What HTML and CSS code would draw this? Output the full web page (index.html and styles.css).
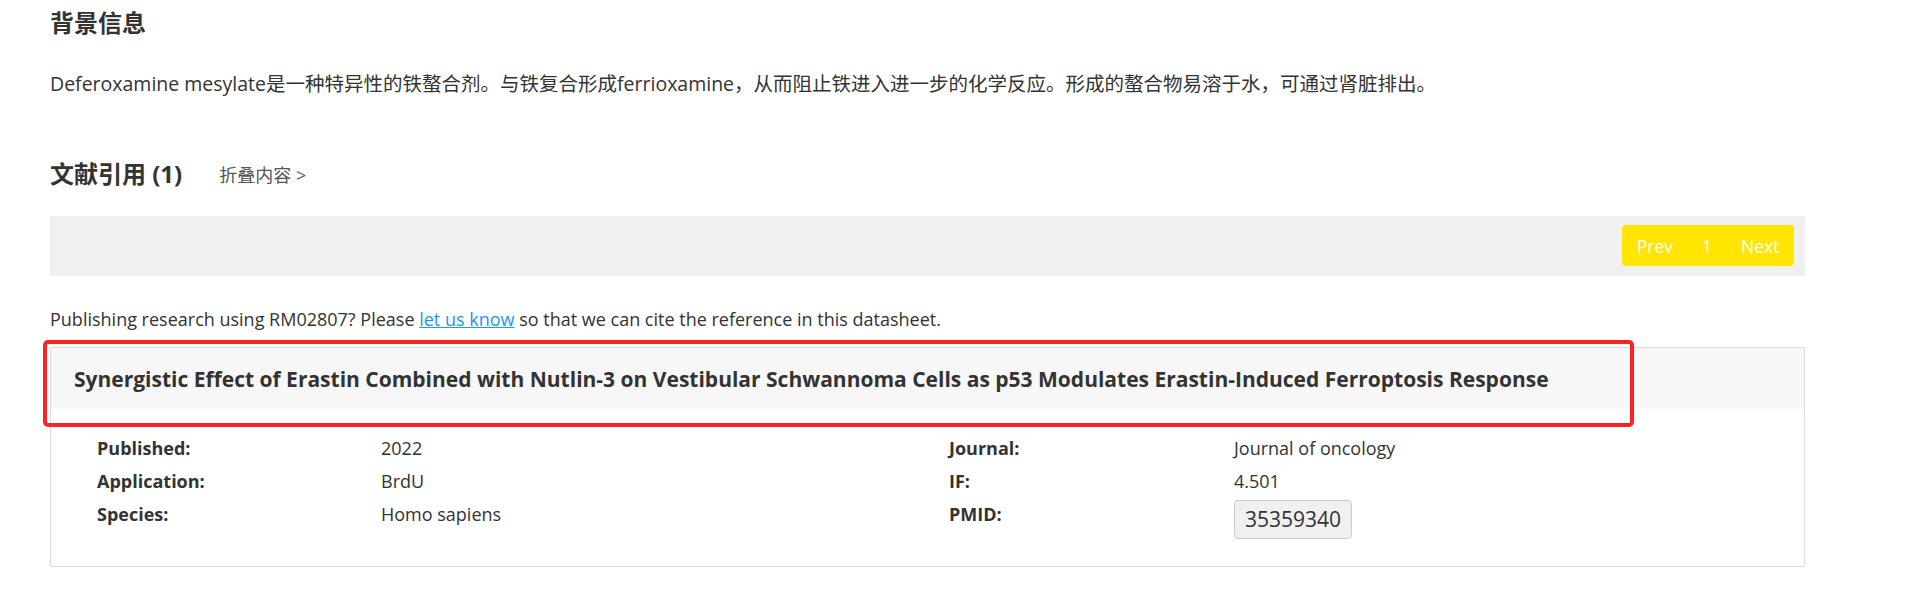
FILE: index.html
```html
<!DOCTYPE html>
<html lang="zh-CN">
<head>
<meta charset="utf-8">
<title>背景信息</title>
<link rel="stylesheet" href="styles.css">
</head>
<body>
<div class="page">
  <h2 class="sec-title">背景信息</h2>
  <p class="bg-text">Deferoxamine mesylate是一种特异性的铁螯合剂。与铁复合形成ferrioxamine，从而阻止铁进入进一步的化学反应。形成的螯合物易溶于水，可通过肾脏排出。</p>

  <div class="ref-head">
    <h2 class="sec-title">文献引用 (1)</h2>
    <a class="fold">折叠内容 &gt;</a>
  </div>

  <div class="pager-bar">
    <div class="pager">
      <span class="pg">Prev</span>
      <span class="pg">1</span>
      <span class="pg">Next</span>
    </div>
  </div>

  <p class="notice">Publishing research using RM02807? Please <a class="link">let us know</a> so that we can cite the reference in this datasheet.</p>

  <div class="card-wrap">
    <div class="card">
      <div class="card-head">Synergistic Effect of Erastin Combined with Nutlin-3 on Vestibular Schwannoma Cells as p53 Modulates Erastin-Induced Ferroptosis Response</div>
      <div class="card-body">
        <div class="lbl">Published:</div><div class="val">2022</div>
        <div class="lbl">Journal:</div><div class="val">Journal of oncology</div>
        <div class="lbl">Application:</div><div class="val">BrdU</div>
        <div class="lbl">IF:</div><div class="val">4.501</div>
        <div class="lbl">Species:</div><div class="val">Homo sapiens</div>
        <div class="lbl">PMID:</div><div class="val"><span class="pmid">35359340</span></div>
      </div>
    </div>
    <div class="highlight"></div>
  </div>
</div>
</body>
</html>
```
FILE: styles.css
```css
html, body {
  margin: 0;
  padding: 0;
  background: #fff;
}
body {
  font-family: "Open Sans", "Noto Sans CJK SC", sans-serif;
  color: #333;
}
.page {
  width: 1755px;
  padding-left: 50px;
}
.sec-title {
  margin: 0;
  font-size: 24px;
  line-height: 36px;
  font-weight: 700;
  color: #333;
}
.page > .sec-title {
  padding-top: 5px;
}
.bg-text {
  margin: 28px 0 0;
  font-size: 19.5px;
  line-height: 30px;
}
.ref-head {
  display: flex;
  align-items: center;
  margin-top: 57px;
  gap: 37px;
}
.fold {
  font-size: 18px;
  color: #555;
}
.pager-bar {
  margin-top: 24px;
  height: 60px;
  background: #f0f0f0;
  display: flex;
  justify-content: flex-end;
  align-items: flex-start;
  padding: 9px 11px 0 0;
  box-sizing: border-box;
}
.pager {
  display: flex;
  background: #ffe500;
  border-radius: 4px;
  height: 41px;
  align-items: center;
}
.pg {
  color: #fff;
  font-size: 17.5px;
  padding: 0 14.5px;
}
.notice {
  margin: 31px 0 0;
  font-size: 18px;
  line-height: 24px;
}
.link {
  color: #2196f3;
  text-decoration: underline;
}
.card-wrap {
  position: relative;
  margin-top: 16px;
}
.card {
  border: 1px solid #ddd;
}
.card-head {
  background: #f7f7f7;
  height: 61px;
  line-height: 62px;
  padding-left: 23px;
  font-size: 21px;
  font-weight: 700;
}
.card-body {
  display: grid;
  grid-template-columns: 284px 568px 285px 1fr;
  grid-auto-rows: 33px;
  padding: 23px 0 35px 46px;
  font-size: 18px;
  line-height: 33px;
}
.lbl {
  font-weight: 700;
}
.pmid {
  display: inline-block;
  margin-top: 2px;
  padding: 0 10px;
  height: 37px;
  line-height: 37px;
  font-size: 21px;
  background: #f0f0f0;
  border: 1px solid #ccc;
  border-radius: 4px;
}
.highlight {
  position: absolute;
  left: -7px;
  top: -7px;
  width: 1583px;
  height: 79px;
  border: 4px solid #ff2222;
  border-radius: 5px;
  pointer-events: none;
}
```
